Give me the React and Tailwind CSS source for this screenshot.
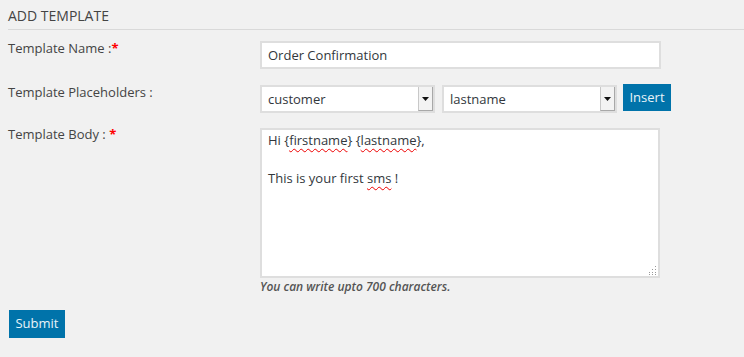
import React from 'react';

const Select = ({ value }) => (
    <div className="flex h-[28px] w-[175px] border-2 border-[#dedede] bg-white">
        <div className="flex-1 pl-[6px] leading-[24px] text-[#32373c]">{value}</div>
        <div className="flex w-[15px] items-center justify-center border-l border-[#c8c8c8] border-r border-b border-r-[#a8a8a8] border-b-[#a8a8a8] bg-[#f3f3f3]">
            <svg width="7" height="4" viewBox="0 0 7 4">
                <polygon points="0,0 7,0 3.5,4" fill="#111" />
            </svg>
        </div>
    </div>
);

const Typo = ({ children }) => (
    <span className="underline decoration-wavy decoration-[#e00] decoration-1 underline-offset-[3px]">{children}</span>
);

const App = () => {
    return (
        <div className="min-h-[357px] bg-[#f1f1f1] pl-2 text-[13px] text-[#444]" style={{ fontFamily: '"Open Sans", "Noto Sans", sans-serif' }}>
            {/* Heading */}
            <div className="h-[30px] border-b border-[#d9d9d9] pt-[6px] text-[14px] leading-5 uppercase">Add Template</div>

            {/* Template Name */}
            <div className="flex items-start">
                <div className="w-[252px] pt-[8px] leading-5">
                    Template Name :<span className="font-bold text-[#f00]">*</span>
                </div>
                <div className="pt-[11px]">
                    <div className="h-[28px] w-[401px] border-2 border-[#dedede] bg-white pl-[6px] leading-[24px] text-[#32373c]">
                        Order Confirmation
                    </div>
                </div>
            </div>

            {/* Placeholders */}
            <div className="mt-[13px] flex items-start">
                <div className="w-[252px] leading-5">Template Placeholders :</div>
                <div className="flex items-start pt-[2px]">
                    <div className="mt-[1px]">
                        <Select value="customer" />
                    </div>
                    <div className="ml-[7px] mt-[1px]">
                        <Select value="lastname" />
                    </div>
                    <button className="ml-[6px] h-[27px] w-[48px] bg-[#0073aa] text-[13px] text-[#e8f3f9]">Insert</button>
                </div>
            </div>

            {/* Template Body */}
            <div className="mt-[11px] flex items-start">
                <div className="w-[252px] leading-5">
                    Template Body : <span className="font-bold text-[#f00]">*</span>
                </div>
                <div className="pt-[4px]">
                    <div className="relative h-[150px] w-[400px] border-2 border-[#dedede] bg-white px-[6px] pt-[1px] leading-[19px] text-[#32373c]">
                        <div>Hi {'{'}<Typo>firstname</Typo>{'}'} {'{'}<Typo>lastname</Typo>{'}'},</div>
                        <div>&nbsp;</div>
                        <div>This is your first <Typo>sms</Typo> !</div>
                        <svg className="absolute right-[1px] bottom-[1px]" width="10" height="10" viewBox="0 0 10 10">
                            <rect x="8" y="1" width="1" height="1" fill="#999" />
                            <rect x="8" y="4" width="1" height="1" fill="#999" />
                            <rect x="5" y="4" width="1" height="1" fill="#999" />
                            <rect x="8" y="7" width="1" height="1" fill="#999" />
                            <rect x="5" y="7" width="1" height="1" fill="#999" />
                            <rect x="2" y="7" width="1" height="1" fill="#999" />
                            <rect x="8" y="9" width="1" height="1" fill="#999" />
                            <rect x="5" y="9" width="1" height="1" fill="#999" />
                            <rect x="2" y="9" width="1" height="1" fill="#999" />
                        </svg>
                    </div>
                    <div className="mt-[-1px] text-[12px] leading-5 font-semibold italic text-[#555]">
                        You can write upto 700 characters.
                    </div>
                </div>
            </div>

            {/* Submit */}
            <button className="mt-[13px] ml-[1px] h-[28px] w-[56px] bg-[#0073aa] text-[13px] text-[#e8f3f9]">Submit</button>
        </div>
    );
};

export default App;
